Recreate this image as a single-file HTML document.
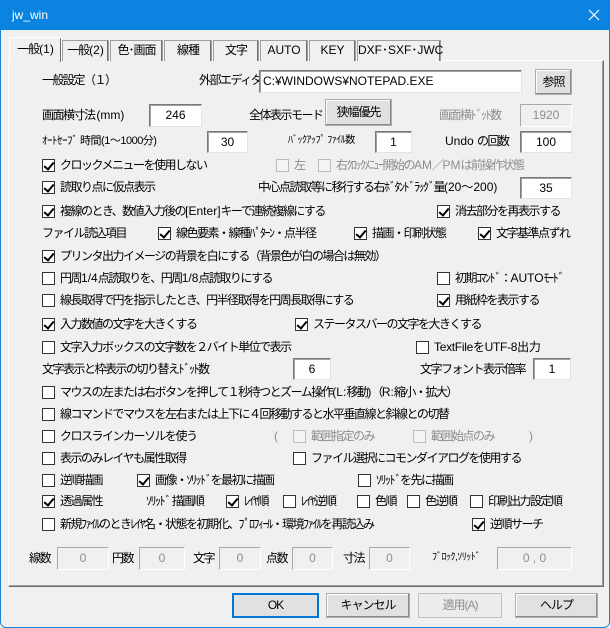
<!DOCTYPE html>
<html><head><meta charset="utf-8"><style>
*{margin:0;padding:0;box-sizing:border-box}
body{width:610px;height:628px;background:#fff;font-family:"Liberation Sans","Noto Sans CJK JP",sans-serif;font-size:12px;color:#000;overflow:hidden;position:relative}
.win{position:absolute;left:0;top:0;width:610px;height:628px;background:#f0f0f0;border:1px solid #1883d7;border-radius:0 0 6px 6px}
.title{position:absolute;left:0;top:0;width:610px;height:30px;background:#0a84e0;color:#fff;font-size:12px}
.a{position:absolute;white-space:nowrap;line-height:16px;letter-spacing:-1.5px}
.l{letter-spacing:0}
.g{color:#8d8d8d}
.cb{position:absolute;width:13px;height:13px;border:1px solid #333;background:#fff}
.cb.d{border-color:#bcbcbc;background:#f4f4f4}
.cb.c::after{content:"";position:absolute;left:3px;top:0px;width:4px;height:8px;border:solid #000;border-width:0 2px 2px 0;transform:rotate(40deg)}
.in{position:absolute;background:#fff;border:1px solid #7a7a7a;border-bottom-color:#e3e3e3;border-right-color:#e3e3e3;box-shadow:inset 1px 1px 0 #a0a0a0;text-align:center;line-height:20px}
.in.d{background:#f0f0f0;color:#8d8d8d;border-color:#a8a8a8 #fff #fff #a8a8a8;box-shadow:none}
.btn{position:absolute;background:#e1e1e1;border:1px solid #adadad;text-align:center;box-shadow:inset -1px -1px 0 #8a8a8a,inset 1px 1px 0 #fff;letter-spacing:-1px;white-space:nowrap}
.tab{position:absolute;top:40px;height:21px;border:1px solid #a0a0a0;border-bottom:none;background:#f0f0f0;text-align:center;line-height:19px;box-shadow:inset -1px 0 0 #6d6d6d;white-space:nowrap}
.tab span{letter-spacing:-1px}
</style></head><body>
<div class="win"></div>
<div class="title"><span class="a l" style="left:12px;top:7px;color:#fff">jw_win</span>
<svg style="position:absolute;left:588px;top:9px" width="12" height="12"><path d="M1 1L11 11M11 1L1 11" stroke="#fff" stroke-width="1.2"/></svg></div>

<div style="position:absolute;left:8px;top:60px;width:596px;height:527px;border:1px solid #fff;border-right-color:#6d6d6d;border-bottom-color:#6d6d6d;box-shadow:inset -1px -1px 0 #a0a0a0"></div>
<div class="tab" style="left:62px;width:47px"><span>一般</span>(2)</div>
<div class="tab" style="left:110px;width:53px"><span>色･画面</span></div>
<div class="tab" style="left:164px;width:48px"><span>線種</span></div>
<div class="tab" style="left:213px;width:46px"><span>文字</span></div>
<div class="tab" style="left:260px;width:48px">AUTO</div>
<div class="tab" style="left:309px;width:47px">KEY</div>
<div class="tab" style="left:357px;width:84px">DXF･SXF･JWC</div>
<div class="tab" style="left:9px;top:37px;height:25px;width:53px;border-color:#fff;line-height:23px;z-index:2"><span>一般</span>(1)</div>

<div class="a" style="left:42px;top:72px">一般設定（１）</div>
<div class="a" style="left:199px;top:72px">外部エディタ</div>
<div class="in" style="left:259px;top:70px;width:263px;height:23px;text-align:left;padding-left:3px">C:¥WINDOWS¥NOTEPAD.EXE</div>
<div class="btn" style="left:535px;top:69px;width:37px;height:26px;line-height:24px">参照</div>

<div class="a" style="left:42px;top:107px">画面横寸法 <span class="l">(mm)</span></div>
<div class="in" style="left:149px;top:104px;width:53px;height:23px">246</div>
<div class="a" style="left:249px;top:107px">全体表示モード</div>
<div class="btn" style="left:325px;top:99px;width:67px;height:27px;line-height:24px">狭幅優先</div>
<div class="a g" style="left:439px;top:107px">画面横ﾄﾞｯﾄ数</div>
<div class="in d" style="left:520px;top:104px;width:52px;height:23px">1920</div>

<div class="a" style="left:42px;top:133px;font-size:11px;letter-spacing:-0.5px">ｵｰﾄｾｰﾌﾞ 時間(1～1000分)</div>
<div class="in" style="left:207px;top:131px;width:41px;height:22px">30</div>
<div class="a" style="left:288px;top:133px;font-size:10px;letter-spacing:-0.5px">ﾊﾞｯｸｱｯﾌﾟ ﾌｧｲﾙ数</div>
<div class="in" style="left:375px;top:131px;width:37px;height:22px">1</div>
<div class="a" style="left:445px;top:133px"><span class="l">Undo </span>の回数</div>
<div class="in" style="left:520px;top:131px;width:52px;height:22px">100</div>

<div class="cb c" style="left:42px;top:159px"></div><div class="a" style="left:60px;top:157px">クロックメニューを使用しない</div>
<div class="cb d" style="left:276px;top:159px"></div><div class="a g" style="left:294px;top:157px">左</div>
<div class="cb d" style="left:318px;top:159px"></div><div class="a g" style="left:336px;top:157px">右ｸﾛｯｸﾒﾆｭｰ開始の<span class="l">AM</span>／<span class="l">PM</span>は前操作状態</div>

<div class="cb c" style="left:42px;top:181px"></div><div class="a" style="left:60px;top:179px">読取り点に仮点表示</div>
<div class="a" style="left:258px;top:179px">中心点読取等に移行する右ﾎﾞﾀﾝﾄﾞﾗｯｸﾞ量<span class="l">(20～200)</span></div>
<div class="in" style="left:520px;top:177px;width:52px;height:22px">35</div>

<div class="cb c" style="left:42px;top:205px"></div><div class="a" style="left:60px;top:203px">複線のとき、数値入力後の<span class="l">[Enter]</span>キーで連続複線にする</div>
<div class="cb c" style="left:437px;top:205px"></div><div class="a" style="left:455px;top:203px">消去部分を再表示する</div>

<div class="a" style="left:42px;top:225px">ファイル読込項目</div>
<div class="cb c" style="left:158px;top:227px"></div><div class="a" style="left:176px;top:225px">線色要素・線種ﾊﾟﾀｰﾝ・点半径</div>
<div class="cb c" style="left:354px;top:227px"></div><div class="a" style="left:372px;top:225px">描画・印刷状態</div>
<div class="cb c" style="left:478px;top:227px"></div><div class="a" style="left:496px;top:225px">文字基準点ずれ</div>

<div class="cb c" style="left:42px;top:250px"></div><div class="a" style="left:60px;top:248px">プリンタ出力イメージの背景を白にする（背景色が白の場合は無効）</div>

<div class="cb" style="left:42px;top:272px"></div><div class="a" style="left:60px;top:270px">円周<span class="l">1/4</span>点読取りを、円周<span class="l">1/8</span>点読取りにする</div>
<div class="cb" style="left:437px;top:272px"></div><div class="a" style="left:455px;top:270px">初期ｺﾏﾝﾄﾞ：<span class="l">AUTO</span>ﾓｰﾄﾞ</div>

<div class="cb" style="left:42px;top:294px"></div><div class="a" style="left:60px;top:292px">線長取得で円を指示したとき、円半径取得を円周長取得にする</div>
<div class="cb c" style="left:437px;top:294px"></div><div class="a" style="left:455px;top:292px">用紙枠を表示する</div>

<div class="cb c" style="left:42px;top:318px"></div><div class="a" style="left:60px;top:316px">入力数値の文字を大きくする</div>
<div class="cb c" style="left:295px;top:318px"></div><div class="a" style="left:313px;top:316px">ステータスバーの文字を大きくする</div>

<div class="cb" style="left:42px;top:341px"></div><div class="a" style="left:60px;top:339px">文字入力ボックスの文字数を２バイト単位で表示</div>
<div class="cb" style="left:416px;top:341px"></div><div class="a" style="left:434px;top:339px;letter-spacing:-0.3px">TextFileをUTF-8出力</div>

<div class="a" style="left:42px;top:361px">文字表示と枠表示の切り替えﾄﾞｯﾄ数</div>
<div class="in" style="left:293px;top:358px;width:38px;height:22px">6</div>
<div class="a" style="left:420px;top:361px">文字フォント表示倍率</div>
<div class="in" style="left:533px;top:358px;width:38px;height:22px">1</div>

<div class="cb" style="left:42px;top:386px"></div><div class="a" style="left:60px;top:384px">マウスの左または右ボタンを押して１秒待つとズーム操作<span class="l">(L:</span>移動<span class="l">)</span>（<span class="l">R:</span>縮小・拡大）</div>
<div class="cb" style="left:42px;top:408px"></div><div class="a" style="left:60px;top:406px">線コマンドでマウスを左右または上下に４回移動すると水平垂直線と斜線との切替</div>

<div class="cb" style="left:42px;top:430px"></div><div class="a" style="left:60px;top:428px">クロスラインカーソルを使う</div>
<div class="a g" style="left:274px;top:428px">(</div>
<div class="cb d" style="left:293px;top:430px"></div><div class="a g" style="left:311px;top:428px">範囲指定のみ</div>
<div class="cb d" style="left:413px;top:430px"></div><div class="a g" style="left:431px;top:428px">範囲始点のみ</div>
<div class="a g" style="left:529px;top:428px">)</div>

<div class="cb" style="left:42px;top:452px"></div><div class="a" style="left:60px;top:450px">表示のみレイヤも属性取得</div>
<div class="cb" style="left:293px;top:452px"></div><div class="a" style="left:311px;top:450px">ファイル選択にコモンダイアログを使用する</div>

<div class="cb" style="left:42px;top:474px"></div><div class="a" style="left:60px;top:472px">逆順描画</div>
<div class="cb c" style="left:137px;top:474px"></div><div class="a" style="left:155px;top:472px">画像・ｿﾘｯﾄﾞを最初に描画</div>
<div class="cb" style="left:358px;top:474px"></div><div class="a" style="left:376px;top:472px">ｿﾘｯﾄﾞを先に描画</div>

<div class="cb c" style="left:42px;top:495px"></div><div class="a" style="left:60px;top:493px">透過属性</div>
<div class="a" style="left:146px;top:493px">ｿﾘｯﾄﾞ 描画順</div>
<div class="cb c" style="left:226px;top:495px"></div><div class="a" style="left:244px;top:493px">ﾚｲﾔ順</div>
<div class="cb" style="left:283px;top:495px"></div><div class="a" style="left:301px;top:493px">ﾚｲﾔ逆順</div>
<div class="cb" style="left:357px;top:495px"></div><div class="a" style="left:375px;top:493px">色順</div>
<div class="cb" style="left:407px;top:495px"></div><div class="a" style="left:425px;top:493px">色逆順</div>
<div class="cb" style="left:470px;top:495px"></div><div class="a" style="left:488px;top:493px">印刷出力設定順</div>

<div class="cb" style="left:42px;top:518px"></div><div class="a" style="left:60px;top:516px">新規ﾌｧｲﾙのときﾚｲﾔ名・状態を初期化、ﾌﾟﾛﾌｨｰﾙ・環境ﾌｧｲﾙを再読込み</div>
<div class="cb c" style="left:472px;top:518px"></div><div class="a" style="left:490px;top:516px">逆順サーチ</div>

<div class="a" style="left:29px;top:550px">線数</div><div class="in d" style="left:57px;top:547px;width:52px;height:23px">0</div>
<div class="a" style="left:112px;top:550px">円数</div><div class="in d" style="left:139px;top:547px;width:46px;height:23px">0</div>
<div class="a" style="left:193px;top:550px">文字</div><div class="in d" style="left:219px;top:547px;width:42px;height:23px">0</div>
<div class="a" style="left:266px;top:550px">点数</div><div class="in d" style="left:292px;top:547px;width:41px;height:23px">0</div>
<div class="a" style="left:343px;top:550px">寸法</div><div class="in d" style="left:369px;top:547px;width:41px;height:23px">0</div>
<div class="a" style="left:432px;top:550px;font-size:10px;letter-spacing:-0.5px">ﾌﾞﾛｯｸ,ｿﾘｯﾄﾞ</div><div class="in d" style="left:497px;top:547px;width:75px;height:23px">0 , 0</div>

<div class="btn" style="left:232px;top:593px;width:87px;height:25px;line-height:23px;border-color:#0078d7;box-shadow:inset 0 0 0 1px #0078d7">OK</div>
<div class="btn" style="left:326px;top:593px;width:84px;height:25px;line-height:23px">キャンセル</div>
<div class="btn" style="left:418px;top:593px;width:84px;height:25px;line-height:23px;color:#8d8d8d;background:#ececec;border-color:#bfbfbf;box-shadow:none">適用(A)</div>
<div class="btn" style="left:515px;top:593px;width:83px;height:25px;line-height:23px">ヘルプ</div>
</body></html>
